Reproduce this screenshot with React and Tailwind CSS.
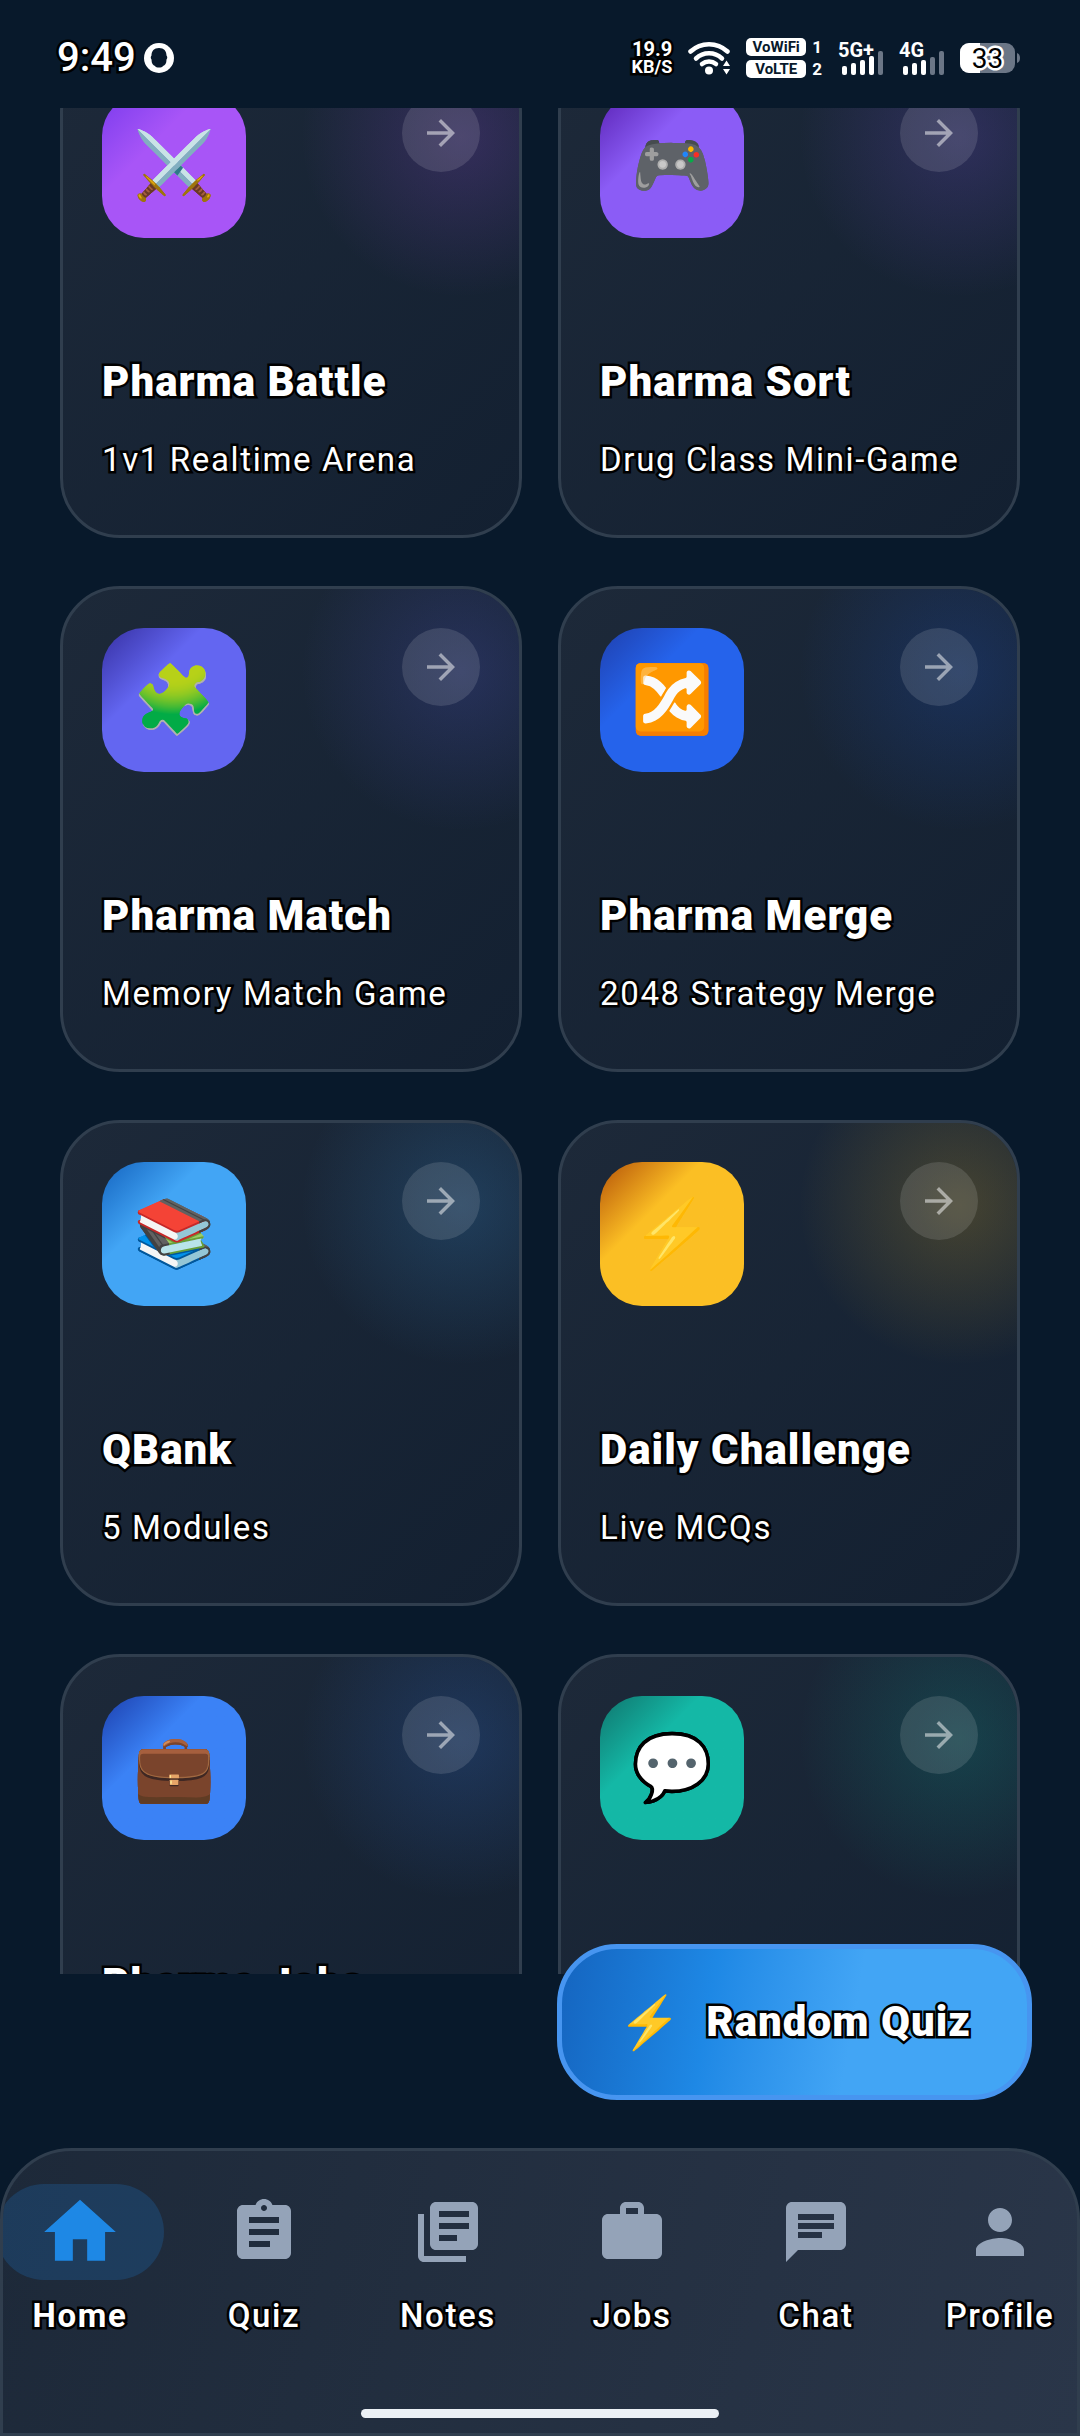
import { useState } from 'react'
import {
  MdArrowForward,
  MdAssignment,
  MdChat,
  MdHome,
  MdLibraryBooks,
  MdPerson,
  MdWork,
} from 'react-icons/md'

const outline = '[-webkit-text-stroke:5px_#000] [paint-order:stroke_fill]'

const modules = [
  {
    title: 'Pharma Battle',
    subtitle: '1v1 Realtime Arena',
    emoji: '⚔️',
    tile: 'from-[#7c3aed] to-[#a855f7]',
    glow: 'from-[#a855f7]/20',
  },
  {
    title: 'Pharma Sort',
    subtitle: 'Drug Class Mini-Game',
    emoji: '🎮',
    tile: 'from-[#5b21b6] to-[#8b5cf6]',
    glow: 'from-[#8b5cf6]/20',
  },
  {
    title: 'Pharma Match',
    subtitle: 'Memory Match Game',
    emoji: '🧩',
    tile: 'from-[#3730a3] to-[#6366f1]',
    glow: 'from-[#6366f1]/20',
  },
  {
    title: 'Pharma Merge',
    subtitle: '2048 Strategy Merge',
    emoji: '🔀',
    tile: 'from-[#1e40af] to-[#2563eb]',
    glow: 'from-[#2563eb]/20',
  },
  {
    title: 'QBank',
    subtitle: '5 Modules',
    emoji: '📚',
    tile: 'from-[#1565c0] to-[#42a5f5]',
    glow: 'from-[#42a5f5]/20',
  },
  {
    title: 'Daily Challenge',
    subtitle: 'Live MCQs',
    emoji: '⚡',
    tile: 'from-[#b45309] to-[#fbbf24]',
    glow: 'from-[#fbbf24]/20',
  },
  {
    title: 'Pharma Jobs',
    emoji: '💼',
    tile: 'from-[#1e40af] to-[#3b82f6]',
    glow: 'from-[#3b82f6]/20',
  },
  {
    title: 'Chat',
    emoji: '💬',
    tile: 'from-[#0f766e] to-[#14b8a6]',
    glow: 'from-[#14b8a6]/20',
  },
]

const tabs = [
  { label: 'Home', Icon: MdHome },
  { label: 'Quiz', Icon: MdAssignment },
  { label: 'Notes', Icon: MdLibraryBooks },
  { label: 'Jobs', Icon: MdWork },
  { label: 'Chat', Icon: MdChat },
  { label: 'Profile', Icon: MdPerson },
]

function Signal({ label, tops, strength }) {
  return (
    <div className="relative flex h-[33px] items-end justify-end pl-1">
      <svg viewBox="0 0 41 33" className="h-[33px] w-[41px]">
        {tops.map((top, i) => (
          <rect
            key={i}
            x={i * 9}
            y={top}
            width="5"
            height={33 - top}
            rx="2"
            fill={i < strength ? '#fff' : '#6b7686'}
          />
        ))}
      </svg>
      <span className="absolute top-0 left-0 text-[20px] leading-4 font-bold">{label}</span>
    </div>
  )
}

function StatusBar() {
  return (
    <header className="flex h-[108px] shrink-0 items-center justify-between pt-2 pr-[60px] pl-[57px] text-white">
      <div className="flex items-center gap-2">
        <span className={`text-[40px] leading-[48px] font-medium ${outline}`}>9:49</span>
        <svg viewBox="0 0 30 30" className="h-[30px] w-[30px]">
          <circle cx="15" cy="15" r="15" fill="#fff" />
          <path
            d="M15 5c5 0 7.500 3 7.500 7.500 1 1 1 3 0 4 0 4-1.500 6-3.500 6.500-1 2-7 2-8 0-2-.5-3.500-2.500-3.500-6.500-1-1-1-3 0-4C7.500 8 10 5 15 5z"
            fill="#08192b"
          />
        </svg>
      </div>

      <div className="flex items-center gap-4">
        <div className={`flex flex-col items-end text-[18px] leading-[18px] font-bold ${outline}`}>
          <span className="text-[20px]">19.9</span>
          <span>KB/S</span>
        </div>

        <svg viewBox="0 0 42 34" className="h-[34px] w-[42px]" fill="none" stroke="#fff" strokeWidth="4.500" strokeLinecap="round">
          <path d="M2.500 10.500a27 27 0 0 1 37 0" />
          <path d="M8 17.500a19 19 0 0 1 26 0" />
          <path d="M14 23a11 11 0 0 1 14 0" />
          <circle cx="21" cy="29.500" r="4" fill="#fff" stroke="none" />
          <path d="M35 25l3.500-5.500L42 25zM35 28h7l-3.500 5.500z" fill="#fff" stroke="none" />
        </svg>

        <div className="grid grid-cols-[60px_auto] items-center gap-x-[6px] gap-y-1 text-[17px] leading-[18px] font-bold">
          <span className="h-[18px] rounded-[5px] bg-white text-center text-[15px] text-[#08192b]">VoWiFi</span>
          <span>1</span>
          <span className="h-[18px] rounded-[5px] bg-white text-center text-[15px] text-[#08192b]">VoLTE</span>
          <span>2</span>
        </div>

        <Signal label="5G+" tops={[24, 21, 18, 14, 9]} strength={4} />
        <Signal label="4G" tops={[24, 21, 18, 15, 9]} strength={3} />

        <div className="relative h-[30px] w-[60px]">
          <svg viewBox="0 0 60 30" className="h-full w-full">
            <rect width="55" height="30" rx="9" fill="#6b7686" />
            <path d="M9 0h11v30H9a9 9 0 0 1-9-9V9a9 9 0 0 1 9-9z" fill="#fff" />
            <path d="M57 10q3 1 3 5t-3 5z" fill="#6b7686" />
          </svg>
          <span className="absolute inset-y-0 left-0 w-[55px] text-center text-[28px] leading-8 text-black [-webkit-text-stroke:5px_#fff] [paint-order:stroke_fill]">
            33
          </span>
        </div>
      </div>
    </header>
  )
}

function ModuleCard({ title, subtitle, emoji, tile, glow }) {
  return (
    <button className="relative flex h-[486px] flex-col justify-between overflow-hidden rounded-[60px] border-3 border-[#303e4e] bg-linear-135 from-[#1d2939] to-[#132031] p-[39px] pb-[51px] text-left">
      <span className={`absolute -top-[78px] -right-[102px] h-80 w-80 rounded-full bg-radial-[closest-side] to-transparent ${glow}`} />
      <span className="relative flex w-full items-start justify-between">
        <span className={`flex h-36 w-36 items-center justify-center rounded-[42px] bg-linear-135 to-35% text-[66px] leading-none ${tile} ${outline}`}>
          {emoji}
        </span>
        <span className="flex h-[78px] w-[78px] items-center justify-center rounded-full bg-white/12">
          <MdArrowForward className="h-[42px] w-[42px] text-white/50" />
        </span>
      </span>
      <span className="relative flex flex-col gap-6 whitespace-nowrap text-white">
        <span className={`text-[42px] leading-[60px] font-black tracking-wide ${outline}`}>{title}</span>
        <span className={`min-h-12 text-[33px] leading-[48px] tracking-wider ${outline}`}>{subtitle}</span>
      </span>
    </button>
  )
}

function BottomNav({ active, onSelect }) {
  return (
    <nav className="shrink-0 overflow-hidden rounded-t-[72px] border-3 border-[#303e4e] bg-linear-105 from-[#1d2939] to-[#2a3649]">
      {/* six tabs run slightly wider than the bar */}
      <div className="-mx-[15px] grid grid-cols-6 pt-[33px]">
        {tabs.map(({ label, Icon }) => {
          const isActive = label === active
          return (
            <button key={label} onClick={() => onSelect(label)} className="flex flex-col items-center gap-3">
              <span className={`flex h-24 w-[168px] items-center justify-center rounded-full ${isActive ? 'bg-[#1e88e5]/20' : ''}`}>
                <Icon className={isActive ? 'h-[86px] w-[86px] text-[#1e88e5]' : 'h-[72px] w-[72px] text-[#94a3b8]'} />
              </span>
              <span className={`text-[33px] leading-[48px] tracking-wider text-white ${isActive ? 'font-bold' : 'font-medium'} ${outline}`}>
                {label}
              </span>
            </button>
          )
        })}
      </div>
      <div className="mx-auto mt-[69px] mb-[15px] h-[9px] w-1/3 rounded-full bg-[#ebf0f5]" />
    </nav>
  )
}

export default function App() {
  const [activeTab, setActiveTab] = useState('Home')

  return (
    <div className="flex h-screen flex-col overflow-hidden bg-[#08192b] font-['Roboto',sans-serif]">
      <StatusBar />

      <main className="min-h-0 flex-1 overflow-hidden px-[60px]">
        <div className="-mt-14 grid grid-cols-2 gap-x-9 gap-y-12">
          {modules.map((module) => (
            <ModuleCard key={module.title} {...module} />
          ))}
        </div>
      </main>

      {/* floating action button, laps over the last row of cards */}
      <div className="relative -mt-[30px] flex h-[204px] shrink-0 items-start justify-end px-12">
        <button className="flex h-[156px] items-center gap-7 rounded-[60px] border-5 border-[#4795f0] bg-linear-100 from-[#1565c0] via-[#1e88e5] via-32% to-[#42a5f5] to-62% px-14 text-white">
          <span className="w-[60px] text-center text-[51px] leading-none">⚡</span>
          <span className={`text-[42px] leading-[60px] font-black tracking-wide ${outline}`}>Random Quiz</span>
        </button>
      </div>

      <BottomNav active={activeTab} onSelect={setActiveTab} />
    </div>
  )
}
